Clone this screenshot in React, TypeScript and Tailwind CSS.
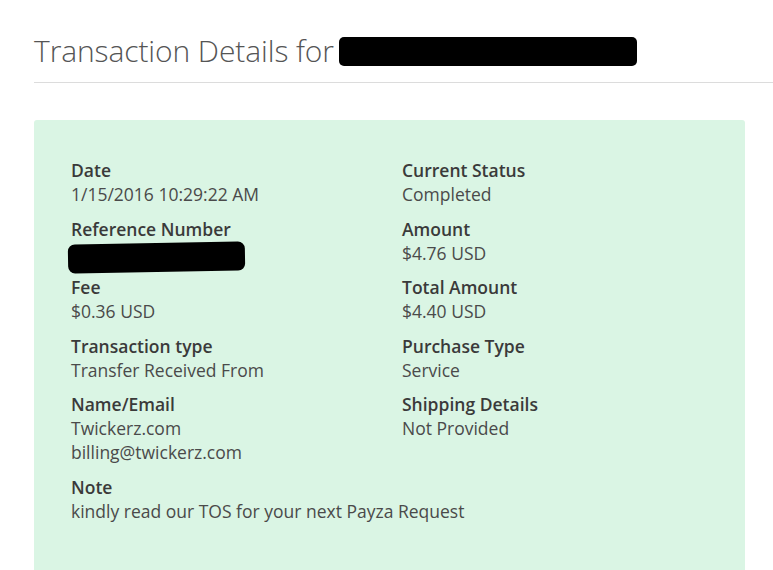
const left = [
  { label: "Date", values: ["1/15/2016 10:29:22 AM"] },
  { label: "Reference Number", redacted: true },
  { label: "Fee", values: ["$0.36 USD"] },
  { label: "Transaction type", values: ["Transfer Received From"] },
  { label: "Name/Email", values: ["Twickerz.com", "billing@twickerz.com"] },
  { label: "Note", values: ["kindly read our TOS for your next Payza Request"] },
];

const right = [
  { label: "Current Status", values: ["Completed"] },
  { label: "Amount", values: ["$4.76 USD"] },
  { label: "Total Amount", values: ["$4.40 USD"] },
  { label: "Purchase Type", values: ["Service"] },
  { label: "Shipping Details", values: ["Not Provided"] },
];

type Item = { label: string; values?: string[]; redacted?: boolean };

function Field({ item }: { item: Item }) {
  return (
    <div className="mb-[10.6px]">
      <div className="font-semibold text-[#3a3a3a]">{item.label}</div>
      {item.redacted ? (
        <div className="h-[24px] relative">
          <div className="absolute left-[-3px] top-[2px] w-[177px] h-[29px] bg-black rounded-[7px] -rotate-[1deg]" />
        </div>
      ) : (
        item.values?.map((v) => (
          <div key={v} className="text-[#4a4a4a] whitespace-nowrap">{v}</div>
        ))
      )}
    </div>
  );
}

export default function App() {
  return (
    <div className="min-h-[570px] bg-white overflow-hidden" style={{ fontFamily: '"Open Sans", sans-serif' }}>
      <div className="pl-[34px] pt-[33px]">
        <div className="flex items-center h-[36px]">
          <h1 className="text-[30px] font-light text-[#555] leading-[36px] tracking-[-0.1px]">Transaction Details for</h1>
          <div className="ml-[5px] w-[298px] h-[29px] bg-black rounded-[5px]" />
        </div>
        <div className="mt-[13px] border-t border-[#dcdcdc]" />
        <div className="mt-[37px] w-[711px] rounded-t-[3px] bg-[#daf5e4] pl-[37px] pt-[38px] pb-[40px] text-[17.5px] leading-[24px]">
          <div className="grid grid-cols-[331px_1fr]">
            <div>
              {left.map((it) => (
                <Field key={it.label} item={it} />
              ))}
            </div>
            <div>
              {right.map((it) => (
                <Field key={it.label} item={it} />
              ))}
            </div>
          </div>
        </div>
      </div>
    </div>
  );
}
